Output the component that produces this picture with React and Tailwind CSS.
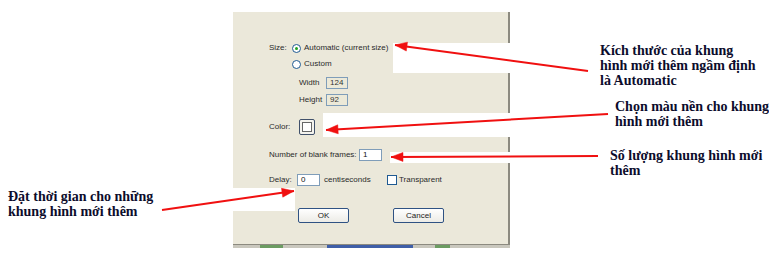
import React from 'react';

// ─── Annotation data ─────────────────────────────────────────
const ARROWS = [
  { from: [588, 71], to: [395, 45] },
  { from: [608, 114], to: [326, 130] },
  { from: [598, 156], to: [391, 157] },
  { from: [162, 210], to: [294, 191] },
];

const NOTES = [
  { x: 600, y: 43, lines: ['Kích thước của khung', 'hình mới thêm ngầm định', 'là Automatic'] },
  { x: 615, y: 99, lines: ['Chọn màu nền cho khung', 'hình mới thêm'] },
  { x: 610, y: 148, lines: ['Số lượng khung hình mới', 'thêm'] },
  { x: 8, y: 189, lines: ['Đặt thời gian cho những', 'khung hình mới thêm'] },
];

function arrowHead([x1, y1], [x2, y2], len = 12, half = 4.5) {
  const a = Math.atan2(y2 - y1, x2 - x1);
  const bx = x2 - len * Math.cos(a);
  const by = y2 - len * Math.sin(a);
  const px = -Math.sin(a) * half;
  const py = Math.cos(a) * half;
  return `${x2},${y2} ${bx + px},${by + py} ${bx - px},${by - py}`;
}

// ─── Small XP-style controls ─────────────────────────────────
function Radio({ checked }) {
  return (
    <span className="flex items-center justify-center w-[9px] h-[9px] rounded-full border border-[#1f5a92] bg-white shrink-0">
      {checked && <span className="w-[3px] h-[3px] rounded-full bg-[#21a121]" />}
    </span>
  );
}

function Field({ value, w, disabled }) {
  return (
    <span
      className={`flex items-center pl-[3px] h-[12px] border border-[#7f9db9] text-[8px] leading-none shrink-0 ${
        disabled ? 'bg-[#ece9d8] text-[#333]' : 'bg-white text-[#111]'
      }`}
      style={{ width: w }}
    >
      {value}
    </span>
  );
}

function Button({ children }) {
  return (
    <span className="flex items-center justify-center w-[51px] h-[15px] rounded-[2px] border border-[#2f5283] bg-gradient-to-b from-white to-[#ecebe6] text-[8px] text-[#222]">
      {children}
    </span>
  );
}

export default function App() {
  return (
    <div className="relative w-[769px] h-[253px] bg-white overflow-hidden font-['Liberation_Sans',Arial,sans-serif] text-[#2a2a2a]">
      {/* Dialog */}
      <div className="ml-[233px] pt-[12px] w-[277px]">
        <div className="h-[233px] bg-[#ebe8da] border-r-2 border-b border-[#8c8a80] pl-[36px] pt-[30px] text-[8px] leading-none">
          <div className="flex items-center h-[12px]">
            <span className="w-[23px]">Size:</span>
            <Radio checked />
            <span className="ml-[3px]">Automatic (current size)</span>
          </div>
          <div className="flex items-center h-[12px] mt-[4px] pl-[23px]">
            <Radio />
            <span className="ml-[3px]">Custom</span>
          </div>
          <div className="flex items-center h-[13px] mt-[6px] pl-[30px]">
            <span className="w-[27px]">Width</span>
            <Field value="124" w={22} disabled />
          </div>
          <div className="flex items-center h-[13px] mt-[4px] pl-[30px]">
            <span className="w-[27px]">Height</span>
            <Field value="92" w={22} disabled />
          </div>
          <div className="flex items-center h-[16px] mt-[13px]">
            <span className="w-[30px]">Color:</span>
            <span className="flex items-center justify-center w-[16px] h-[16px] rounded-[2px] border border-[#40506a] bg-[#f4f3ee]">
              <span className="w-[10px] h-[10px] border border-[#666] bg-white" />
            </span>
          </div>
          <div className="flex items-center h-[12px] mt-[14px]">
            <span className="w-[90px]">Number of blank frames:</span>
            <Field value="1" w={23} />
          </div>
          <div className="flex items-center h-[12px] mt-[13px]">
            <span className="w-[28px]">Delay:</span>
            <Field value="0" w={23} />
            <span className="w-[67px] pl-[4px]">centiseconds</span>
            <span className="w-[10px] h-[10px] border border-[#1f5a92] bg-white" />
            <span className="ml-[2px]">Transparent</span>
          </div>
          <div className="flex items-center mt-[22px] pl-[29px] gap-[44px]">
            <Button>OK</Button>
            <Button>Cancel</Button>
          </div>
        </div>
        {/* taskbar sliver under the dialog */}
        <div className="flex h-[3px] bg-[#c9c7bd]">
          <span className="ml-[27px] w-[23px] bg-[#6c9c62]" />
          <span className="ml-[44px] w-[86px] bg-[#3f5fa8]" />
          <span className="ml-[22px] w-[15px] bg-[#6c9c62]" />
        </div>
      </div>

      {/* White cut-outs behind the arrows */}
      <div className="absolute left-[393px] top-[43px] w-[130px] h-[30px] bg-white" />
      <div className="absolute left-[323px] top-[113px] w-[200px] h-[24px] bg-white" />
      <div className="absolute left-[390px] top-[152px] w-[133px] h-[11px] bg-white" />
      <div className="absolute left-0 top-[188px] w-[295px] h-[23px] bg-white" />

      {/* Arrows */}
      <svg className="absolute inset-0" width="769" height="253">
        {ARROWS.map((a, i) => (
          <g key={i} fill="#f01010" stroke="#f01010">
            <line x1={a.from[0]} y1={a.from[1]} x2={a.to[0]} y2={a.to[1]} strokeWidth="2" />
            <polygon points={arrowHead(a.from, a.to)} strokeWidth="0.5" />
          </g>
        ))}
      </svg>

      {/* Notes */}
      {NOTES.map((n, i) => (
        <div
          key={i}
          className="absolute font-['Liberation_Serif','Times_New_Roman',serif] font-bold text-[14px] leading-[15px] text-[#0c0c2c] whitespace-nowrap"
          style={{ left: n.x, top: n.y }}
        >
          {n.lines.map((l) => (
            <div key={l}>{l}</div>
          ))}
        </div>
      ))}
    </div>
  );
}
